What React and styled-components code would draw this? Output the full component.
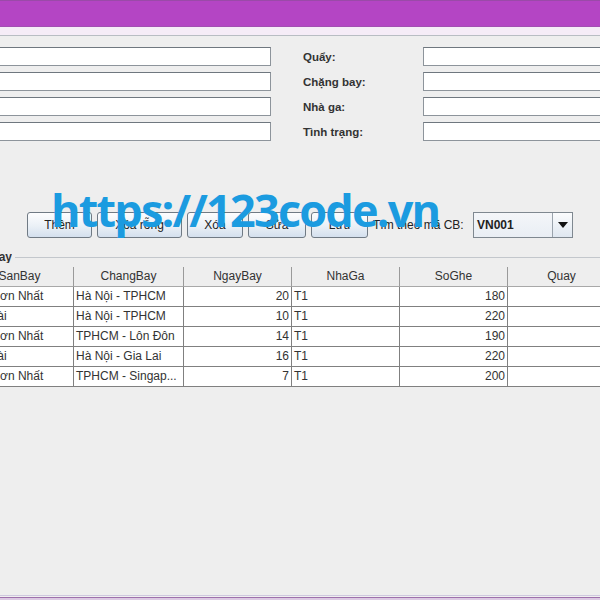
import React from "react";
import styled, { createGlobalStyle } from "styled-components";

const GlobalStyle = createGlobalStyle`
  html, body { margin: 0; padding: 0; }
  body {
    background: #eeeeee;
    font-family: "Liberation Sans", Arial, sans-serif;
  }
`;

const Root = styled.div`
  position: relative;
  width: 600px;
  height: 600px;
  overflow: hidden;
  display: flex;
  flex-direction: column;
  background: #eeeeee;
`;

const TitleBar = styled.div`
  flex-shrink: 0;
  height: 25px;
  background: #b445c4;
  border-top: 1px solid #9a4aa8;
  border-bottom: 1px solid #a24eb2;
`;

const Strip = styled.div`
  flex-shrink: 0;
  height: 8px;
  background: #f5ecf7;
  border-bottom: 1px solid #b8bdc3;
`;

const Window = styled.div`
  flex: 1;
  margin-left: -120px;
  width: 860px;
  display: flex;
  flex-direction: column;
  background: #eeeeee;
`;

const FormGrid = styled.div`
  display: grid;
  grid-template-columns: 40px 351px 152px 260px;
  grid-auto-rows: 19px;
  row-gap: 6px;
  padding-top: 11px;
`;

const FieldLabel = styled.label`
  display: flex;
  align-items: center;
  padding-left: ${(p) => p.$indent || 0}px;
  font-size: 11.5px;
  font-weight: bold;
  color: #333333;
  white-space: nowrap;
`;

const TextField = styled.div`
  background: #ffffff;
  border: 1px solid #8d949b;
  border-top-color: #6f777f;
`;

const ButtonRow = styled.div`
  display: flex;
  align-items: center;
  gap: 5px;
  height: 26px;
  margin-top: 71px;
  padding-left: 147px;
`;

const Button = styled.button`
  box-sizing: border-box;
  width: ${(p) => p.$w}px;
  height: 26px;
  padding: 0;
  border: 1px solid #707a84;
  border-radius: 3px;
  background: linear-gradient(#fdfdfe, #eaf0f6 55%, #d4e0ee);
  font-family: "Liberation Sans", Arial, sans-serif;
  font-size: 12px;
  color: #222222;
`;

const SearchLabel = styled.span`
  width: 95px;
  font-size: 12px;
  color: #222222;
  white-space: nowrap;
`;

const Combo = styled.div`
  width: 100px;
  height: 26px;
  box-sizing: border-box;
  display: flex;
  border: 1px solid #7f8890;
  background: linear-gradient(#f4f6f9, #e9eef4);
`;

const ComboValue = styled.span`
  flex: 1;
  display: flex;
  align-items: center;
  padding-left: 3px;
  font-size: 12px;
  font-weight: bold;
  color: #222222;
`;

const ComboArrow = styled.span`
  width: 19px;
  display: flex;
  align-items: center;
  justify-content: center;
  border-left: 1px solid #9aa3ac;
  background: linear-gradient(#fbfcfd, #dfe7f0);
`;

const GroupHeader = styled.div`
  display: grid;
  grid-template-columns: 132px 1fr;
  align-items: center;
  column-gap: 3px;
  height: 12px;
  margin-top: 13px;
`;

const GroupTitle = styled.span`
  text-align: right;
  font-size: 12px;
  font-weight: bold;
  color: #333333;
  line-height: 12px;
  white-space: nowrap;
  overflow: hidden;
`;

const GroupLine = styled.span`
  height: 1px;
  background: #c3c7cc;
`;

const Table = styled.div`
  margin-top: 4px;
  margin-left: 86px;
  display: flex;
  flex-direction: column;
`;

const Row = styled.div`
  display: grid;
  grid-template-columns: 108px 110px 108px 108px 108px 108px;
  height: 20px;
  background: ${(p) => (p.$head ? "#eeeeee" : "#ffffff")};
  width: 650px;
`;

const HeadCell = styled.div`
  box-sizing: border-box;
  border-right: 1px solid #9a9a9a;
  border-bottom: 1px solid #a8a8a8;
  text-align: center;
  font-size: 12px;
  line-height: 19px;
  color: #333333;
  white-space: nowrap;
  overflow: hidden;
`;

const Cell = styled.div`
  box-sizing: border-box;
  border-right: 1px solid #808080;
  border-bottom: 1px solid #808080;
  padding: 0 2px;
  text-align: ${(p) => (p.$num ? "right" : "left")};
  font-size: 12px;
  line-height: 19px;
  color: #333333;
  white-space: nowrap;
  overflow: hidden;
`;

const Spacer = styled.div`
  flex: 1;
`;

const BottomEdge = styled.div`
  flex-shrink: 0;
  height: 5px;
  background: linear-gradient(
    to bottom,
    #cfc8df 0 1px,
    #efefef 1px 2px,
    #9e70ac 2px 3px,
    #dccae3 3px 5px
  );
`;

const Watermark = styled.div`
  position: absolute;
  left: 51px;
  top: 182px;
  font-family: "Open Sans", "Liberation Sans", sans-serif;
  font-weight: 700;
  font-size: 45px;
  letter-spacing: -1.8px;
  line-height: 56px;
  color: #1b9be0;
  white-space: nowrap;
  pointer-events: none;
`;

const leftLabels = ["Mã CB:", "Ngày bay:", "Sân bay:", "Số ghế:"];
const rightLabels = ["Quẩy:", "Chặng bay:", "Nhà ga:", "Tình trạng:"];

const buttons = [
  ["Thêm", 65],
  ["Xóa rỗng", 85],
  ["Xóa", 56],
  ["Sửa", 58],
  ["Lưu", 57],
];

const headers = ["SanBay", "ChangBay", "NgayBay", "NhaGa", "SoGhe", "Quay"];

const rows = [
  ["Tân Sơn Nhất", "Hà Nội - TPHCM", "20", "T1", "180", ""],
  ["Nội Bài", "Hà Nội - TPHCM", "10", "T1", "220", ""],
  ["Tân Sơn Nhất", "TPHCM - Lôn Đôn", "14", "T1", "190", ""],
  ["Nội Bài", "Hà Nội - Gia Lai", "16", "T1", "220", ""],
  ["Tân Sơn Nhất", "TPHCM - Singap...", "7", "T1", "200", ""],
];

const numericCols = [2, 4];

export default function App() {
  return (
    <>
      <GlobalStyle />
      <Root>
        <TitleBar />
        <Strip />
        <Window>
          <FormGrid>
            {leftLabels.map((l, i) => (
              <React.Fragment key={l}>
                <FieldLabel>{l}</FieldLabel>
                <TextField />
                <FieldLabel $indent={32}>{rightLabels[i]}</FieldLabel>
                <TextField />
              </React.Fragment>
            ))}
          </FormGrid>
          <ButtonRow>
            {buttons.map(([t, w]) => (
              <Button key={t} $w={w}>
                {t}
              </Button>
            ))}
            <SearchLabel>Tìm theo mã CB:</SearchLabel>
            <Combo>
              <ComboValue>VN001</ComboValue>
              <ComboArrow>
                <svg width="10" height="6" viewBox="0 0 10 6">
                  <polygon points="0,0 10,0 5,6" fill="#111" />
                </svg>
              </ComboArrow>
            </Combo>
          </ButtonRow>
          <GroupHeader>
            <GroupTitle>Danh sách chuyến bay</GroupTitle>
            <GroupLine />
          </GroupHeader>
          <Table>
            <Row $head>
              {headers.map((h) => (
                <HeadCell key={h}>{h}</HeadCell>
              ))}
            </Row>
            {rows.map((r, i) => (
              <Row key={i}>
                {r.map((c, j) => (
                  <Cell key={j} $num={numericCols.includes(j)}>
                    {c}
                  </Cell>
                ))}
              </Row>
            ))}
          </Table>
          <Spacer />
        </Window>
        <BottomEdge />
        <Watermark>https://123code.vn</Watermark>
      </Root>
    </>
  );
}
